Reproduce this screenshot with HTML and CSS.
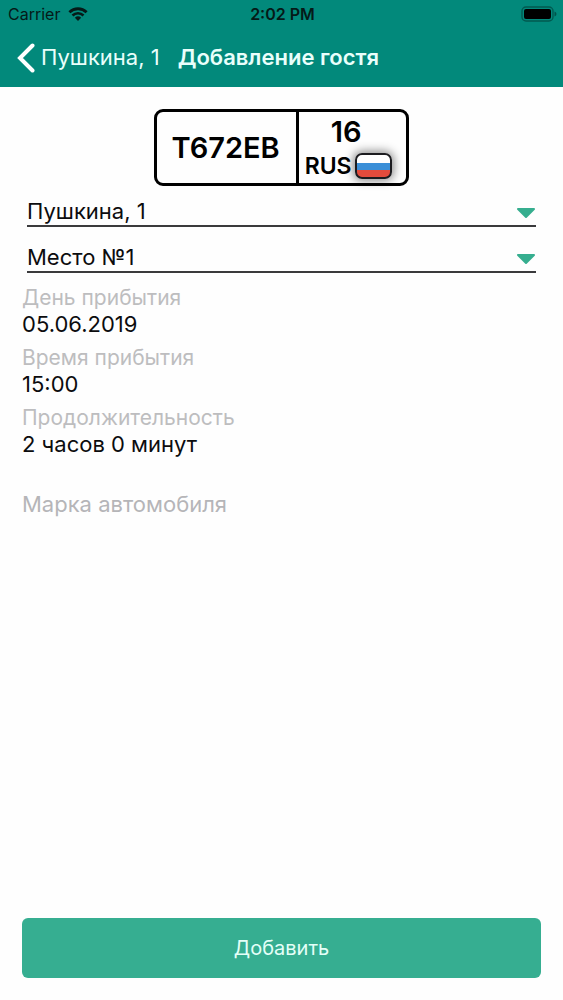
FILE: index.html
```html
<!DOCTYPE html>
<html lang="ru">
<head>
<meta charset="utf-8">
<meta name="viewport" content="width=device-width, initial-scale=1">
<title>Добавление гостя</title>
<link rel="stylesheet" href="styles.css">
</head>
<body>
<div class="screen">
  <header class="header">
    <div class="status">
      <div class="status-left">
        <span>Carrier</span>
        <svg class="wifi" viewBox="0 0 20 14" aria-hidden="true">
          <path d="M1.4 5.2a12.4 12.4 0 0 1 17.2 0" fill="none" stroke="currentColor" stroke-width="2.8"/>
          <path d="M4.5 8.5a7.9 7.9 0 0 1 11 0" fill="none" stroke="currentColor" stroke-width="2.6"/>
          <path d="M10 14 6.9 10.8a4.5 4.5 0 0 1 6.2 0z" fill="currentColor"/>
        </svg>
      </div>
      <span class="clock">2:02 PM</span>
      <svg class="battery" viewBox="0 0 36 16" aria-hidden="true">
        <rect x="1" y="1" width="31" height="14" rx="4" fill="none" stroke="#000" stroke-opacity=".35" stroke-width="1.4"/>
        <rect x="3" y="3" width="27" height="10" rx="2" fill="#000"/>
        <path d="M33.5 5.5q2 .8 2 2.500t-2 2.500z" fill="#000" fill-opacity=".4"/>
      </svg>
    </div>
    <nav class="nav">
      <a class="back" href="#">
        <svg class="chevron" viewBox="0 0 18 30" aria-hidden="true">
          <path d="M15.5 2.5 3 15l12.500 12.500" fill="none" stroke="currentColor" stroke-width="4" stroke-linecap="round"/>
        </svg>
        <span>Пушкина, 1</span>
      </a>
      <h1 class="title">Добавление гостя</h1>
    </nav>
  </header>
  <form class="form">
    <div class="plate">
      <div class="plate-number">T672EB</div>
      <div class="plate-side">
        <span class="region">16</span>
        <div class="country">
          <span>RUS</span>
          <span class="flag"></span>
        </div>
      </div>
    </div>
    <div class="pickers">
      <div class="picker">
        <select class="select" aria-label="Адрес"><option>Пушкина, 1</option></select>
        <svg class="arrow" viewBox="0 0 20 12" aria-hidden="true"><path d="M2 2h16l-8 8z" fill="currentColor" stroke="currentColor" stroke-width="2" stroke-linejoin="round"/></svg>
      </div>
      <div class="picker">
        <select class="select" aria-label="Место"><option>Место №1</option></select>
        <svg class="arrow" viewBox="0 0 20 12" aria-hidden="true"><path d="M2 2h16l-8 8z" fill="currentColor" stroke="currentColor" stroke-width="2" stroke-linejoin="round"/></svg>
      </div>
    </div>
    <div class="fields">
      <div class="field">
        <label class="label" for="day">День прибытия</label>
        <input class="input" id="day" type="text" value="05.06.2019">
      </div>
      <div class="field">
        <label class="label" for="time">Время прибытия</label>
        <input class="input" id="time" type="text" value="15:00">
      </div>
      <div class="field">
        <label class="label" for="duration">Продолжительность</label>
        <input class="input" id="duration" type="text" value="2 часов 0 минут">
      </div>
    </div>
    <input class="input car" type="text" aria-label="Марка автомобиля" placeholder="Марка автомобиля">
    <button class="submit" type="button">Добавить</button>
  </form>
</div>
</body>
</html>
```
FILE: styles.css
```css
* {
  box-sizing: border-box;
}

body {
  margin: 0;
  background: #fefefe;
  color: #0c0c0e;
  font-family: Inter, "Liberation Sans", sans-serif;
  font-size: 22px;
  line-height: 27px;
}

.screen {
  min-height: 100vh;
  display: flex;
  flex-direction: column;
}

.header {
  background: #02897b;
}

.status {
  display: grid;
  grid-template-columns: 1fr auto 1fr;
  align-items: center;
  height: 28px;
  padding: 0 6px 0 8px;
  color: #051a18;
  font-size: 16px;
}

.status-left {
  display: flex;
  align-items: center;
  gap: 8px;
}

.wifi {
  width: 20px;
  height: 14px;
}

.clock {
  font-weight: 600;
}

.battery {
  justify-self: end;
  width: 36px;
  height: 16px;
}

.nav {
  display: flex;
  align-items: center;
  gap: 18px;
  height: 59px;
  padding: 0 17px;
  color: #e9fffb;
}

.back {
  display: flex;
  align-items: center;
  gap: 6px;
  color: inherit;
  text-decoration: none;
  white-space: nowrap;
}

.chevron {
  width: 18px;
  height: 30px;
  color: #fff;
}

.title {
  margin: 0;
  font-size: 22px;
  font-weight: 600;
  white-space: nowrap;
}

.form {
  flex: 1;
  display: flex;
  flex-direction: column;
  padding: 22px;
}

.plate {
  align-self: center;
  display: flex;
  height: 77px;
  border: 3px solid #000;
  border-radius: 9px;
  color: #000;
  font-weight: 600;
}

.plate-number {
  display: flex;
  align-items: center;
  padding: 0 16px 0 14px;
  border-right: 3px solid #000;
  font-size: 29px;
}

.plate-side {
  display: flex;
  flex-direction: column;
  align-items: center;
  padding: 3px 14px 0 6px;
}

.region {
  padding-right: 4px;
  font-size: 29px;
  line-height: 34px;
}

.country {
  display: flex;
  align-items: center;
  gap: 3px;
  height: 34px;
  font-size: 23px;
}

.flag {
  width: 37px;
  height: 26px;
  border: 2px solid #1c1c20;
  border-radius: 7px;
  background: linear-gradient(#fff 36%, #3b8fd8 36% 68%, #e34b3c 68%);
  box-shadow: 0 0 10px 2px rgba(0, 0, 0, .45);
}

.pickers {
  padding: 0 5px;
}

.picker {
  display: grid;
  grid-template-columns: 1fr 20px;
  align-items: end;
  height: 46px;
  border-bottom: 2px solid #3a3a3c;
}

.pickers .picker:first-child {
  height: 41px;
}

.select {
  grid-area: 1 / 1 / 2 / 3;
  appearance: none;
  width: 100%;
  height: 27px;
  padding: 0;
  border: 0;
  background: transparent;
  color: inherit;
  font: inherit;
}

.arrow {
  grid-area: 1 / 2;
  width: 20px;
  height: 12px;
  margin-bottom: 6px;
  color: #36ae8f;
  pointer-events: none;
}

.fields {
  display: flex;
  flex-direction: column;
  gap: 6px;
  padding-top: 11px;
}

.field {
  display: flex;
  flex-direction: column;
}

.label {
  color: #bdbdbf;
  font-size: 21px;
}

.input {
  width: 100%;
  height: 27px;
  padding: 0;
  border: 0;
  outline: 0;
  background: transparent;
  color: inherit;
  font: inherit;
}

.car {
  margin-top: 33px;
}

.car::placeholder {
  color: #b5b5b8;
  opacity: 1;
}

.submit {
  height: 60px;
  margin-top: auto;
  border: 0;
  border-radius: 6px;
  background: #36ae91;
  color: #e4fff8;
  font: inherit;
  font-size: 20px;
}
```
